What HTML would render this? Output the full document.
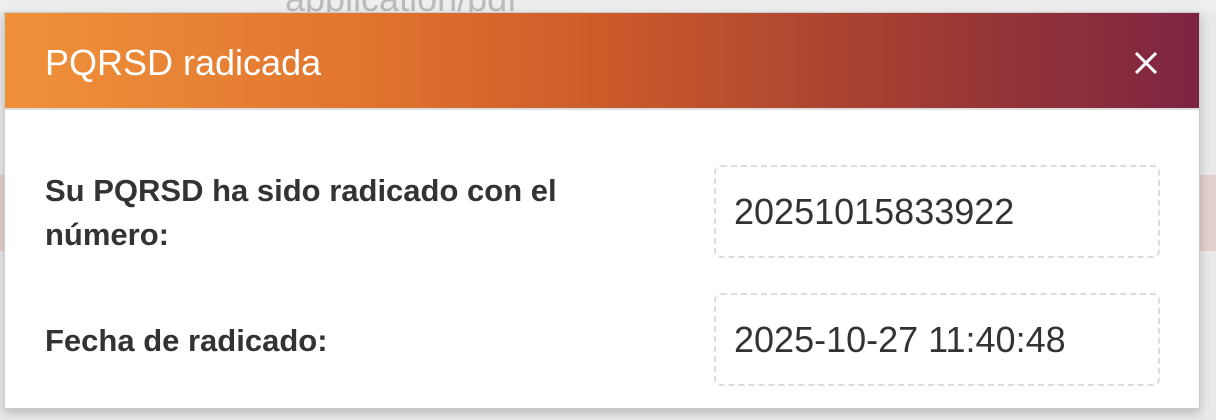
<!DOCTYPE html>
<html><head><meta charset="utf-8"><style>
*{margin:0;padding:0;box-sizing:border-box}
body{width:1216px;height:420px;overflow:hidden;background:#e9e9e9;font-family:"Liberation Sans",Arial,sans-serif;position:relative}
.bgtop{position:absolute;left:0;top:0;width:1216px;height:12px;background:#eee}
.bgtxt{position:absolute;left:285px;top:-22px;font-size:36px;color:#bbb}
.pink{position:absolute;left:0;top:175px;width:1216px;height:76px;background:#e4d0cc}
.modal{position:absolute;left:4px;top:12px;width:1196px;height:397px;background:#fff;border:1px solid #ccc;box-shadow:0 4px 10px rgba(0,0,0,.2)}
.head{height:97px;background:linear-gradient(90deg,#f0913a 0%,#e0752f 30%,#cc5b2a 50%,#9d3a34 78%,#7d2442 100%);border-bottom:2px solid #ddd;position:relative}
.title{position:absolute;left:40px;top:32px;color:#fff;font-size:36px;line-height:36px;white-space:nowrap}
.x{position:absolute;right:42px;top:39px;width:22px;height:22px}
.lbl{position:absolute;left:40px;font-weight:bold;font-size:31px;color:#333;line-height:44px;white-space:nowrap}
.box{position:absolute;left:709px;width:446px;height:93px;border:2px dashed #ddd;border-radius:7px;font-size:36px;color:#333;padding-left:18px;line-height:89px;white-space:nowrap}
</style></head><body>
<div class="bgtop"></div><div class="bgtxt">application/pdf</div>
<div class="pink"></div>
<div class="modal">
<div class="head"><div class="title">PQRSD radicada</div>
<svg class="x" viewBox="0 0 22 22"><path d="M1 1L21 21M21 1L1 21" stroke="#fff" stroke-width="3"/></svg></div>
<div class="lbl" style="top:156px">Su PQRSD ha sido radicado con el<br>número:</div>
<div class="box" style="top:152px">20251015833922</div>
<div class="lbl" style="top:306px">Fecha de radicado:</div>
<div class="box" style="top:280px">2025-10-27 11:40:48</div>
</div>
</body></html>
